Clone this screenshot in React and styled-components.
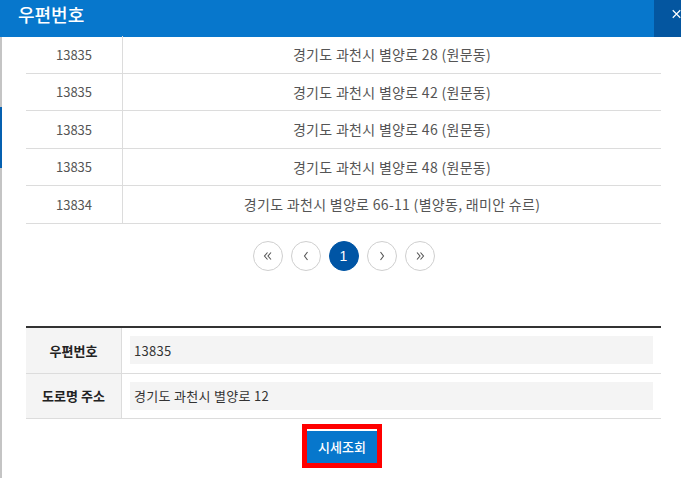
import styled, { createGlobalStyle } from "styled-components";

const GlobalStyle = createGlobalStyle`
  html, body {
    margin: 0;
    padding: 0;
    background: #fff;
    font-family: "Noto Sans CJK KR", "Noto Sans", sans-serif;
  }
  * { box-sizing: border-box; }
`;

const rows = [
  { zip: "13835", addr: "경기도 과천시 별양로 28 (원문동)" },
  { zip: "13835", addr: "경기도 과천시 별양로 42 (원문동)" },
  { zip: "13835", addr: "경기도 과천시 별양로 46 (원문동)" },
  { zip: "13835", addr: "경기도 과천시 별양로 48 (원문동)" },
  { zip: "13834", addr: "경기도 과천시 별양로 66-11 (별양동, 래미안 슈르)" },
];

const Modal = styled.div`
  width: 681px;
  height: 478px;
  overflow: hidden;
  display: flex;
  flex-direction: column;
  position: relative;
`;

const Header = styled.div`
  height: 37px;
  flex-shrink: 0;
  background: #0777cc;
  display: flex;
  justify-content: space-between;
  align-items: stretch;
`;

const Title = styled.h1`
  margin: 0;
  padding: 2px 0 0 18px;
  font-size: 18px;
  font-weight: 500;
  line-height: 24px;
  color: #fff;
`;

const CloseBtn = styled.button`
  width: 27px;
  border: none;
  padding: 8px 0 0 18px;
  background: #0456a0;
  display: flex;
  align-items: flex-start;
  overflow: hidden;
`;

const Body = styled.div`
  flex: 1;
  border-left: 2px solid #c4c4c4;
  padding: 0 20px 0 24px;
  display: flex;
  flex-direction: column;
`;

const BackStrip = styled.div`
  position: absolute;
  left: 0;
  top: 107px;
  width: 2px;
  height: 61px;
  background: #0560b0;
`;

const ResultList = styled.div`
  display: flex;
  flex-direction: column;
  margin-top: -1px;
`;

const ResultRow = styled.div`
  display: grid;
  grid-template-columns: 96px 1fr;
  height: 37.5px;
  border-bottom: 1px solid #dcdcdc;
  color: #555;
`;

const Cell = styled.div`
  display: flex;
  align-items: center;
  justify-content: center;
  font-size: ${({ $divider }) => ($divider ? "14px" : "13px")};
  letter-spacing: ${({ $divider }) => ($divider ? "0.3px" : "0")};
  border-left: ${({ $divider }) => ($divider ? "1px solid #dcdcdc" : "none")};
  white-space: nowrap;
`;

const Pager = styled.div`
  display: flex;
  justify-content: center;
  gap: 8px;
  margin-top: 17px;
`;

const PageBtn = styled.button`
  width: 30px;
  height: 30px;
  border-radius: 50%;
  border: 1px solid ${({ $active }) => ($active ? "#0055a5" : "#cfcfcf")};
  background: ${({ $active }) => ($active ? "#0055a5" : "#fff")};
  color: ${({ $active }) => ($active ? "#fff" : "#555")};
  font-size: 14px;
  font-family: "Liberation Sans", sans-serif;
  display: flex;
  align-items: center;
  justify-content: center;
  padding: 0;
`;

const Form = styled.div`
  margin-top: 55px;
  border-top: 2px solid #333;
  display: flex;
  flex-direction: column;
`;

const FormRow = styled.div`
  display: grid;
  grid-template-columns: 96px 1fr;
  height: ${({ $h }) => $h}px;
  border-bottom: 1px solid #dcdcdc;
`;

const Label = styled.div`
  background: #f4f4f4;
  display: flex;
  align-items: center;
  justify-content: center;
  font-size: 13px;
  font-weight: 700;
  color: #222;
  border-right: 1px solid #dcdcdc;
`;

const InputCell = styled.div`
  display: flex;
  align-items: center;
  padding: 0 8px;
`;

const Field = styled.div`
  flex: 1;
  height: 28px;
  background: #f4f4f4;
  display: flex;
  align-items: center;
  padding-left: 4px;
  font-size: 13px;
  letter-spacing: 0.3px;
  color: #333;
`;

const ButtonRow = styled.div`
  display: flex;
  justify-content: center;
  margin-top: 5px;
  padding-right: 3px;
`;

const Highlight = styled.div`
  border: 5px solid #ff0000;
  display: flex;
`;

const SubmitBtn = styled.button`
  width: 70px;
  height: 34px;
  border: none;
  border-top: 2px solid #fff;
  background: #0777cc;
  color: #fff;
  font-family: "Noto Sans CJK KR", sans-serif;
  font-size: 13px;
  font-weight: 500;
  padding: 0;
`;

const Chevron = ({ dir = "left", double }) => {
  const flip = dir === "right" ? "scale(-1,1) translate(-12,0)" : undefined;
  return (
    <svg width="12" height="12" viewBox="0 0 12 12" fill="none">
      <g transform={flip} stroke="#555" strokeWidth="1.1">
        {double ? (
          <>
            <path d="M5.5 2.5 L2.5 6 L5.5 9.5" />
            <path d="M9 2.5 L6 6 L9 9.5" />
          </>
        ) : (
          <path d="M7.5 2 L4.5 6 L7.5 10" />
        )}
      </g>
    </svg>
  );
};

export default function App() {
  return (
    <>
      <GlobalStyle />
      <Modal>
        <Header>
          <Title>우편번호</Title>
          <CloseBtn aria-label="close">
            <svg width="12" height="12" viewBox="0 0 12 12">
              <path d="M1 1 L11 11 M11 1 L1 11" stroke="#fff" strokeWidth="1.6" />
            </svg>
          </CloseBtn>
        </Header>
        <Body>
          <ResultList>
            {rows.map((r, i) => (
              <ResultRow key={i}>
                <Cell>{r.zip}</Cell>
                <Cell $divider>{r.addr}</Cell>
              </ResultRow>
            ))}
          </ResultList>
          <Pager>
            <PageBtn><Chevron double /></PageBtn>
            <PageBtn><Chevron /></PageBtn>
            <PageBtn $active>1</PageBtn>
            <PageBtn><Chevron dir="right" /></PageBtn>
            <PageBtn><Chevron dir="right" double /></PageBtn>
          </Pager>
          <Form>
            <FormRow $h={46}>
              <Label>우편번호</Label>
              <InputCell>
                <Field>13835</Field>
              </InputCell>
            </FormRow>
            <FormRow $h={45}>
              <Label>도로명 주소</Label>
              <InputCell>
                <Field>경기도 과천시 별양로 12</Field>
              </InputCell>
            </FormRow>
          </Form>
          <ButtonRow>
            <Highlight>
              <SubmitBtn>시세조회</SubmitBtn>
            </Highlight>
          </ButtonRow>
        </Body>
        <BackStrip />
      </Modal>
    </>
  );
}
